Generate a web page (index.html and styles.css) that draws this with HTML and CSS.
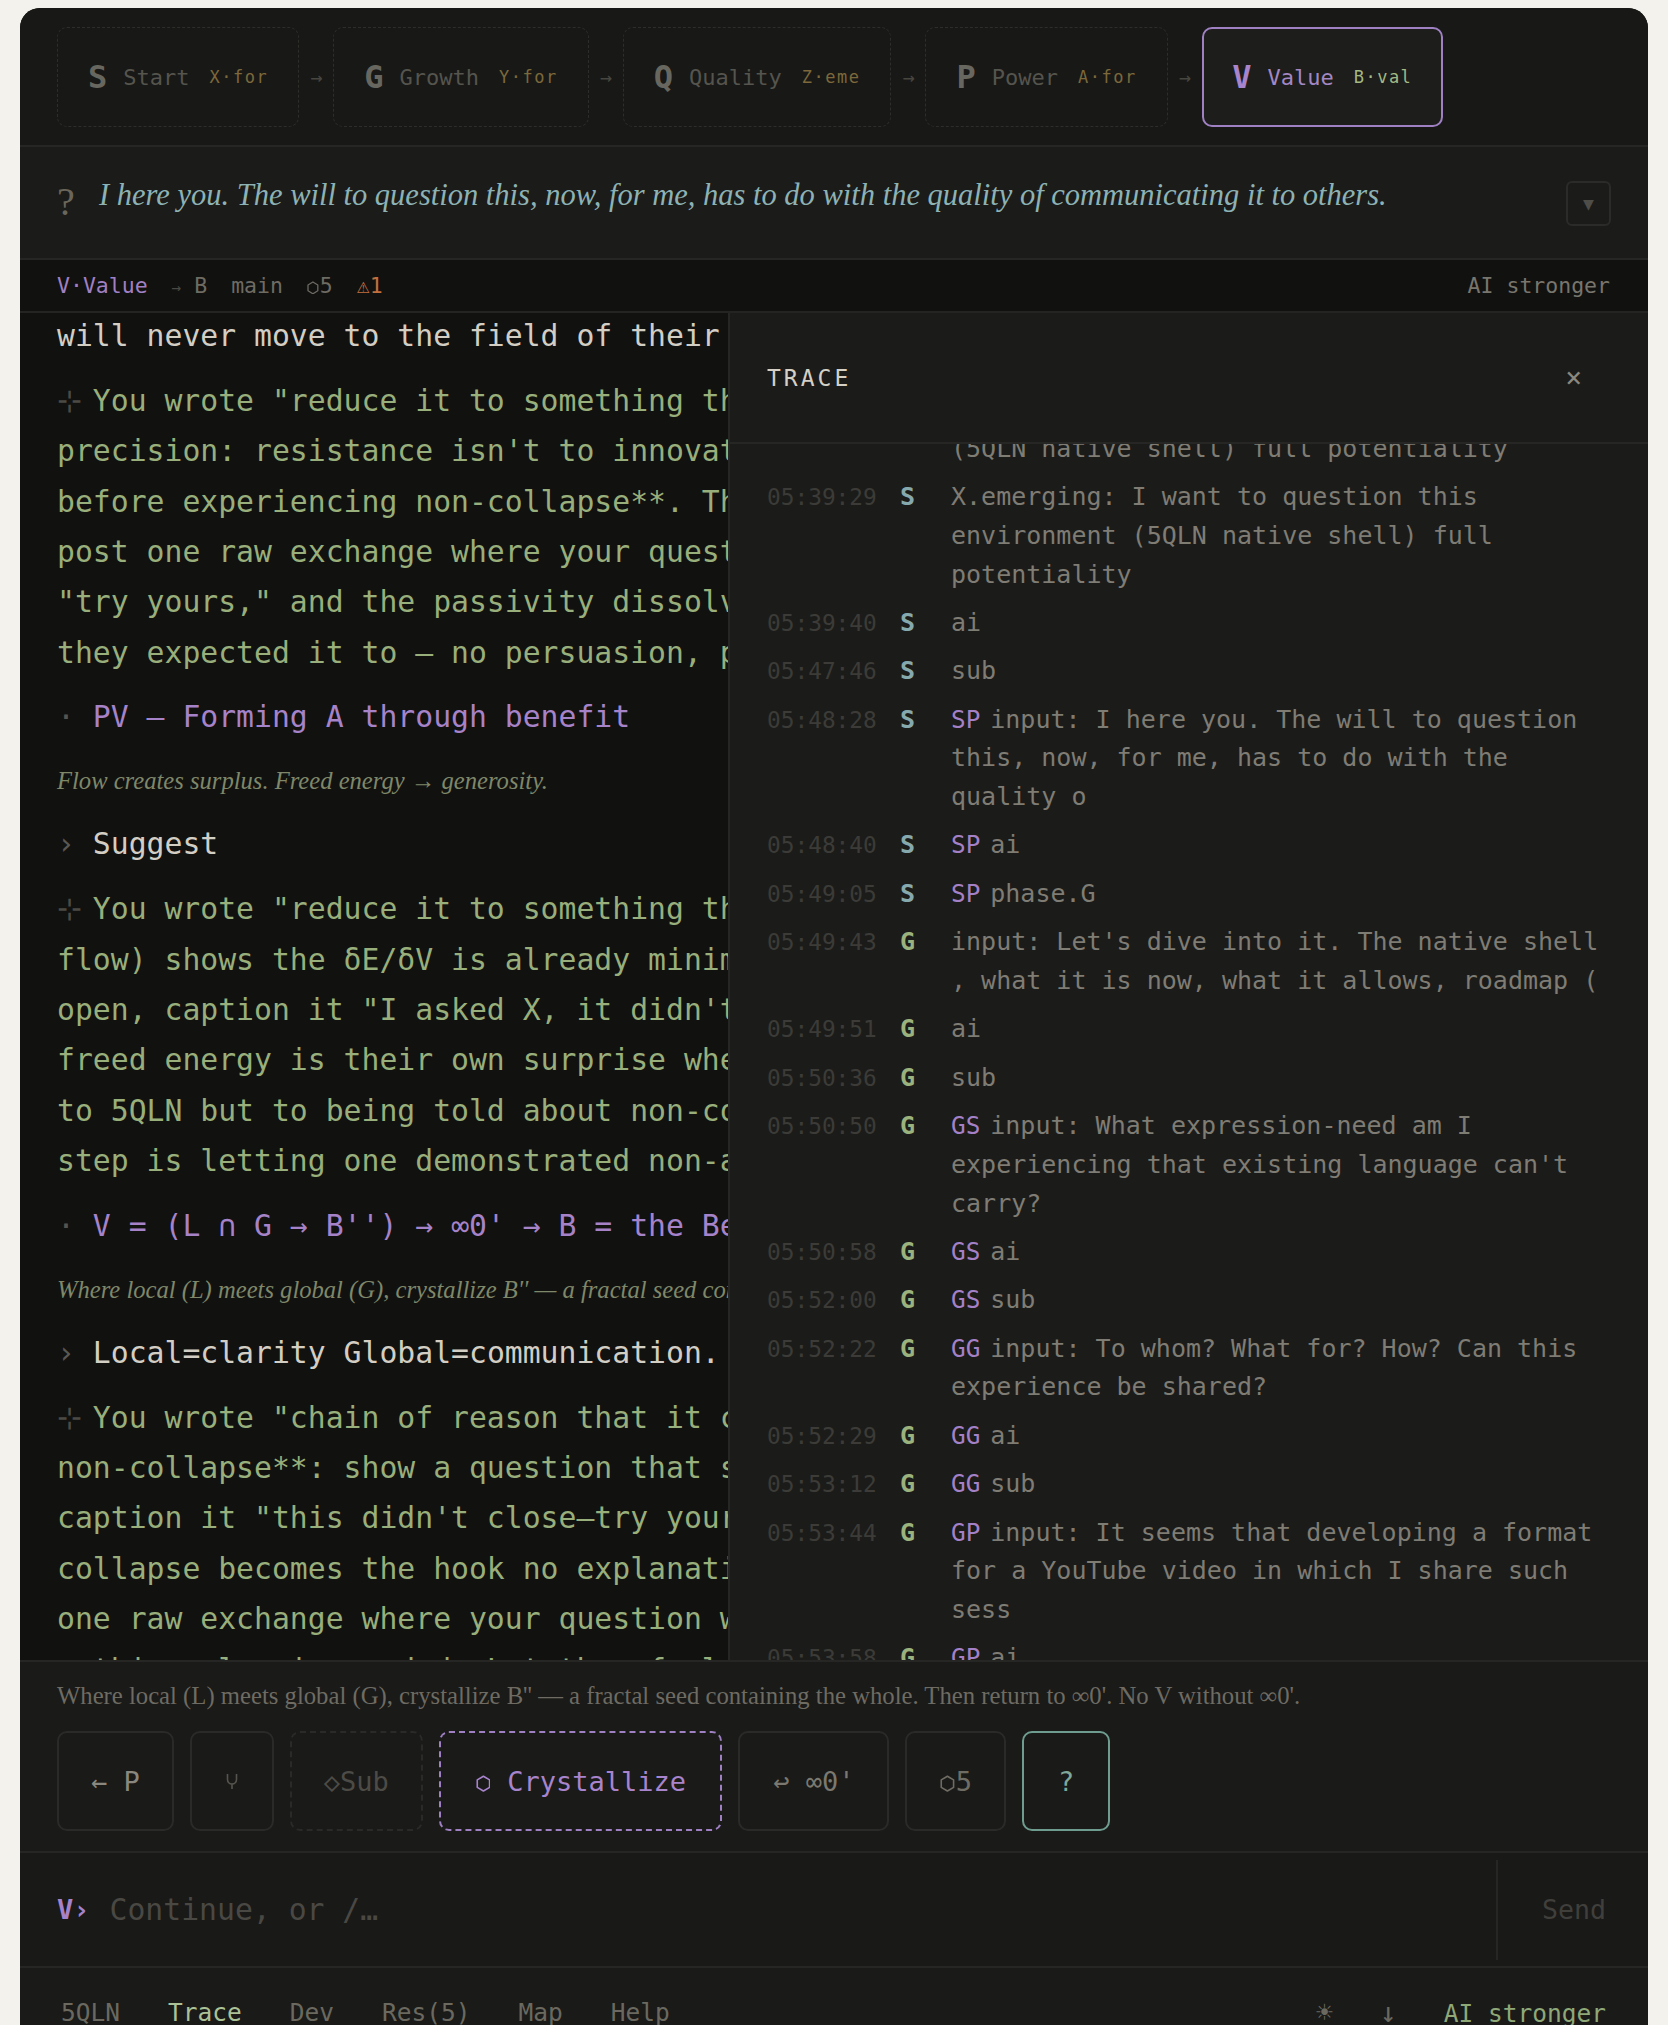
FILE: index.html
```html
<!DOCTYPE html>
<html lang="en">
<head>
<meta charset="utf-8">
<title>5QLN — Value</title>
<link rel="stylesheet" href="styles.css">
</head>
<body>
<div class="app">
  <header class="phasebar">
    <div class="phase"><span class="ph-letter">S</span><span class="ph-name">Start</span><span class="ph-sub">X·for</span></div>
    <span class="ph-arrow">→</span>
    <div class="phase"><span class="ph-letter">G</span><span class="ph-name">Growth</span><span class="ph-sub">Y·for</span></div>
    <span class="ph-arrow">→</span>
    <div class="phase"><span class="ph-letter">Q</span><span class="ph-name">Quality</span><span class="ph-sub">Z·eme</span></div>
    <span class="ph-arrow">→</span>
    <div class="phase"><span class="ph-letter">P</span><span class="ph-name">Power</span><span class="ph-sub">A·for</span></div>
    <span class="ph-arrow">→</span>
    <div class="phase active"><span class="ph-letter">V</span><span class="ph-name">Value</span><span class="ph-sub">B·val</span></div>
  </header>

  <section class="question">
    <span class="q-mark">?</span>
    <p class="q-text">I here you. The will to question this, now, for me, has to do with the quality of communicating it to others.</p>
    <button class="q-toggle" type="button">▼</button>
  </section>

  <div class="status">
    <div class="status-left">
      <span class="st-phase">V·Value</span>
      <span class="st-branch"><span class="st-arrow">→</span> B</span>
      <span>main</span>
      <span><span class="sym"><svg class="hex" viewBox="0 0 12 14"><polygon points="6,1 11,4 11,10 6,13 1,10 1,4"/></svg></span>5</span>
      <span class="st-warn"><span class="sym">⚠</span>1</span>
    </div>
    <span class="status-right">AI stronger</span>
  </div>

  <main class="stage">
    <div class="transcript">
      <p class="user">will never move to the field of their own experience.</p>
      <p class="ai"><span class="mark sym">⊹</span> You wrote "reduce it to something that anyone can use" — and that is the<br>precision: resistance isn't to innovation itself, it's to committing<br>before experiencing non-collapse**. The move that follows is simple:<br>post one raw exchange where your question stayed open, invite them to<br>"try yours," and the passivity dissolves the moment it doesn't close the way<br>they expected it to — no persuasion, proof.</p>
      <p class="head"><span class="dot">·</span> PV — Forming A through benefit</p>
      <p class="note">Flow creates surplus. Freed energy → generosity.</p>
      <p class="cmd"><span class="caret">›</span> Suggest</p>
      <p class="ai"><span class="mark sym">⊹</span> You wrote "reduce it to something that anyone can use" — and the record (your<br>flow) shows the δE/δV is already minimal: you don't need to simplify, you<br>open, caption it "I asked X, it didn't close," and post it. What reads as<br>freed energy is their own surprise when it holds. The resistance was never<br>to 5QLN but to being told about non-collapse instead of seeing it. The next<br>step is letting one demonstrated non-answer speak for itself.</p>
      <p class="head"><span class="dot">·</span> V = (L ∩ G → B'') → ∞0' → B = the Benefit</p>
      <p class="note">Where local (L) meets global (G), crystallize B'' — a fractal seed containing the whole.</p>
      <p class="cmd"><span class="caret">›</span> Local=clarity Global=communication.</p>
      <p class="ai"><span class="mark sym">⊹</span> You wrote "chain of reason that it can follow" — that is the ask before<br>non-collapse**: show a question that stayed open in practice, then<br>caption it "this didn't close—try yours." The moment of witnessed non-<br>collapse becomes the hook no explanation could be. Start small: post<br>one raw exchange where your question wasn't answered away, and<br>nothing else is needed. Let them feel it open.</p>
    </div>

    <aside class="trace">
      <div class="trace-head">
        <span class="trace-title">TRACE</span>
        <span class="trace-close">×</span>
      </div>
      <div class="trace-list">
        <div class="trace-rows">
          <div class="row"><span class="t">05:39:18</span><span class="ph s">S</span><span class="msg">input: I want to question this environment (5QLN native shell) full potentiality</span></div>
          <div class="row"><span class="t">05:39:29</span><span class="ph s">S</span><span class="msg">X.emerging: I want to question this environment (5QLN native shell) full potentiality</span></div>
          <div class="row"><span class="t">05:39:40</span><span class="ph s">S</span><span class="msg">ai</span></div>
          <div class="row"><span class="t">05:47:46</span><span class="ph s">S</span><span class="msg">sub</span></div>
          <div class="row"><span class="t">05:48:28</span><span class="ph s">S</span><span class="msg"><span class="tag">SP</span>input: I here you. The will to question this, now, for me, has to do with the quality o</span></div>
          <div class="row"><span class="t">05:48:40</span><span class="ph s">S</span><span class="msg"><span class="tag">SP</span>ai</span></div>
          <div class="row"><span class="t">05:49:05</span><span class="ph s">S</span><span class="msg"><span class="tag">SP</span>phase.G</span></div>
          <div class="row"><span class="t">05:49:43</span><span class="ph g">G</span><span class="msg">input: Let's dive into it. The native shell , what it is now, what it allows, roadmap (</span></div>
          <div class="row"><span class="t">05:49:51</span><span class="ph g">G</span><span class="msg">ai</span></div>
          <div class="row"><span class="t">05:50:36</span><span class="ph g">G</span><span class="msg">sub</span></div>
          <div class="row"><span class="t">05:50:50</span><span class="ph g">G</span><span class="msg"><span class="tag">GS</span>input: What expression-need am I experiencing that existing language can't carry?</span></div>
          <div class="row"><span class="t">05:50:58</span><span class="ph g">G</span><span class="msg"><span class="tag">GS</span>ai</span></div>
          <div class="row"><span class="t">05:52:00</span><span class="ph g">G</span><span class="msg"><span class="tag">GS</span>sub</span></div>
          <div class="row"><span class="t">05:52:22</span><span class="ph g">G</span><span class="msg"><span class="tag">GG</span>input: To whom? What for? How? Can this experience be shared?</span></div>
          <div class="row"><span class="t">05:52:29</span><span class="ph g">G</span><span class="msg"><span class="tag">GG</span>ai</span></div>
          <div class="row"><span class="t">05:53:12</span><span class="ph g">G</span><span class="msg"><span class="tag">GG</span>sub</span></div>
          <div class="row"><span class="t">05:53:44</span><span class="ph g">G</span><span class="msg"><span class="tag">GP</span>input: It seems that developing a format for a YouTube video in which I share such sess</span></div>
          <div class="row"><span class="t">05:53:58</span><span class="ph g">G</span><span class="msg"><span class="tag">GP</span>ai</span></div>
          <div class="row"><span class="t">05:54:20</span><span class="ph g">G</span><span class="msg"><span class="tag">GP</span>sub</span></div>
        </div>
      </div>
    </aside>
  </main>

  <section class="actions">
    <p class="hint">Where local (L) meets global (G), crystallize B'' — a fractal seed containing the whole. Then return to ∞0'. No V without ∞0'.</p>
    <div class="btns">
      <button class="btn" type="button"><span class="sym">←</span> P</button>
      <button class="btn btn-fork" type="button"><svg class="fork" viewBox="0 0 14 20" width="14" height="20"><path d="M2.5 3v5.5a4.5 4.5 0 0 0 9 0V3M7 13v5" fill="none" stroke="currentColor" stroke-width="1.6"/></svg></button>
      <button class="btn btn-sub" type="button"><span class="sym">◇</span>Sub</button>
      <button class="btn btn-cry" type="button"><span class="sym"><svg class="hex" viewBox="0 0 12 14"><polygon points="6,1 11,4 11,10 6,13 1,10 1,4"/></svg></span> Crystallize</button>
      <button class="btn btn-ret" type="button"><span class="sym">↩</span> ∞0'</button>
      <button class="btn btn-hex" type="button"><span class="sym"><svg class="hex" viewBox="0 0 12 14"><polygon points="6,1 11,4 11,10 6,13 1,10 1,4"/></svg></span>5</button>
      <button class="btn btn-help" type="button">?</button>
    </div>
  </section>

  <form class="composer">
    <span class="prompt">V›</span>
    <span class="placeholder">Continue, or /…</span>
    <button class="send" type="button">Send</button>
  </form>

  <footer class="foot">
    <nav class="foot-left">
      <span>5QLN</span>
      <span class="on">Trace</span>
      <span>Dev</span>
      <span>Res(5)</span>
      <span>Map</span>
      <span>Help</span>
    </nav>
    <div class="foot-right">
      <span class="sym sun">☀</span>
      <span class="sym arrow">↓</span>
      <span class="ai-strong">AI stronger</span>
    </div>
  </footer>
</div>
</body>
</html>
```

FILE: styles.css
```css
* { box-sizing: border-box; margin: 0; padding: 0; }

html, body {
  background: #f3f2ed;
  height: 2025px;
  overflow: hidden;
}

body {
  padding: 8px 20px 0;
  font-family: "DejaVu Sans Mono", "Liberation Mono", monospace;
  color: #cfcac0;
}

button {
  font-family: inherit;
  background: none;
  cursor: pointer;
}

.sym {
  display: inline-block;
  width: 1ch;
  text-align: center;
}

.hex {
  width: 0.55em;
  height: 0.64em;
  vertical-align: -0.06em;
  fill: none;
  stroke: currentColor;
  stroke-width: 1.3;
  stroke-linejoin: round;
}

.app {
  width: 1628px;
  height: 2017px;
  background: #151514;
  border-radius: 20px 20px 0 0;
  overflow: hidden;
  display: flex;
  flex-direction: column;
}

/* ---------- phase bar ---------- */
.phasebar {
  flex: none;
  height: 139px;
  display: flex;
  align-items: center;
  gap: 11px;
  padding: 19px 37px 18px;
  background: #181817;
  border-bottom: 2px solid #262624;
}

.phase {
  height: 100px;
  display: flex;
  align-items: center;
  padding: 0 30px;
  border: 1.5px dashed #2d2d2a;
  border-radius: 10px;
}

.ph-letter {
  font-size: 32px;
  font-weight: bold;
  color: #68675f;
  margin-right: 16px;
}

.ph-name {
  font-size: 22px;
  color: #55544d;
  margin-right: 20px;
}

.ph-sub {
  font-size: 17px;
  letter-spacing: 1.5px;
  color: #7c683a;
}

.ph-arrow {
  font-size: 20px;
  color: #47463f;
}

.phase.active {
  border: 2px solid #9f80c2;
  background: #1d1d1c;
  padding: 0 28.5px;
}

.phase.active .ph-letter { color: #a884cc; }
.phase.active .ph-name { color: #a287c4; }
.phase.active .ph-sub { color: #a2b983; }

/* ---------- question ---------- */
.question {
  flex: none;
  height: 113px;
  display: flex;
  align-items: flex-start;
  padding: 28px 37px 0;
  background: #1b1b1a;
  border-bottom: 2px solid #262624;
}

.q-mark {
  width: 42px;
  flex: none;
  margin-top: 3px;
  font-family: "Liberation Serif", serif;
  font-size: 40px;
  line-height: 48px;
  color: #6b665a;
}

.q-text {
  flex: 1;
  font-family: "Liberation Serif", serif;
  font-style: italic;
  font-size: 30.5px;
  line-height: 40px;
  color: #8db2b4;
}

.q-toggle {
  flex: none;
  width: 45px;
  height: 45px;
  margin-top: 6px;
  border: 2px solid #2b2b29;
  border-radius: 6px;
  color: #4f4d47;
  font-size: 18px;
}

/* ---------- status ---------- */
.status {
  flex: none;
  height: 53px;
  display: flex;
  align-items: center;
  justify-content: space-between;
  padding: 0 38px 0 37px;
  background: #111110;
  border-bottom: 2px solid #242422;
  font-size: 21.5px;
  color: #6e6b63;
}

.status-left {
  display: flex;
  align-items: center;
  gap: 24px;
}

.st-phase { color: #a07fc3; }
.st-arrow { color: #4a4944; font-size: 16px; }
.st-warn { color: #c26f3d; }
.status-right { color: #78756c; }

/* ---------- stage ---------- */
.stage {
  flex: none;
  position: relative;
  height: 1347px;
  background: #111110;
  overflow: hidden;
}

.transcript {
  margin-top: -2px;
  padding: 0 37px;
  font-size: 29.75px;
  line-height: 50.4px;
  white-space: nowrap;
}

.transcript > * + * { margin-top: 14.3px; }

.user { color: #d3cec4; }
.ai { color: #98ae7b; }
.mark { color: #4b4a44; }
.head { color: #a683c9; }
.dot { color: #56544e; }
.cmd { color: #d3cec4; }
.caret { color: #5a5852; }

.note {
  font-family: "Liberation Serif", serif;
  font-style: italic;
  font-size: 24.6px;
  line-height: 48px;
  color: #7f8769;
}

/* ---------- trace overlay ---------- */
.trace {
  position: absolute;
  top: 0;
  right: 0;
  bottom: 0;
  width: 920px;
  display: flex;
  flex-direction: column;
  background: #1b1b1a;
  border-left: 2px solid #262624;
}

.trace-head {
  flex: none;
  height: 131px;
  display: flex;
  align-items: center;
  justify-content: space-between;
  padding: 0 66px 0 37px;
  border-bottom: 2px solid #262624;
}

.trace-title {
  font-size: 23px;
  letter-spacing: 3px;
  color: #d5d0c5;
}

.trace-close {
  font-size: 28px;
  color: #8a877e;
}

.trace-list {
  flex: 1;
  overflow: hidden;
  padding-left: 37px;
}

.trace-rows {
  margin-top: -53px;
  display: flex;
  flex-direction: column;
  gap: 9.7px;
}

.row {
  display: grid;
  grid-template-columns: 133px 51px 677px;
  font-size: 25px;
  line-height: 38.7px;
}

.t { font-size: 22.8px; color: #3c3b37; }
.ph { font-weight: bold; }
.ph.s { color: #86a9ad; }
.ph.g { color: #9bb27d; }
.msg { color: #7f7c74; }
.tag { font-size: 24.3px; color: #a481c6; margin-right: 10px; }

/* ---------- actions ---------- */
.actions {
  flex: none;
  height: 191px;
  padding: 19px 37px 0;
  background: #1a1a19;
  border-top: 2px solid #262624;
}

.hint {
  font-family: "Liberation Serif", serif;
  font-size: 24.7px;
  line-height: 30px;
  color: #6e6b62;
  white-space: nowrap;
}

.btns {
  display: flex;
  gap: 16px;
  margin-top: 20px;
}

.btn {
  height: 100px;
  display: flex;
  align-items: center;
  padding: 0 32px;
  border: 2px solid #2a2a28;
  border-radius: 10px;
  font-size: 27px;
  color: #8a877e;
  white-space: pre;
}

.btn-fork { color: #56544e; padding: 0 33px; }
.btn-sub { border-style: dashed; color: #4d4b46; }
.btn-cry { border: 2px dashed #9f80c2; color: #a884cc; padding: 0 34px; }
.btn-ret { color: #7b786f; padding: 0 33px; }
.btn-hex { color: #6f6c63; }
.btn-help { border-color: #6e9d90; color: #7fa89b; padding: 0 34px; }

/* ---------- composer ---------- */
.composer {
  flex: none;
  height: 115px;
  display: flex;
  align-items: center;
  padding-left: 37px;
  background: #191918;
  border-top: 2px solid #262624;
  font-size: 29.75px;
}

.prompt {
  color: #a683c9;
  font-weight: bold;
  font-size: 27px;
  margin-right: 20px;
}

.placeholder {
  flex: 1;
  color: #4a4843;
}

.send {
  height: 100px;
  display: flex;
  align-items: center;
  padding: 0 42px 0 44px;
  border: none;
  border-left: 2px solid #262624;
  font-size: 26.6px;
  color: #403f3b;
}

/* ---------- footer ---------- */
.foot {
  flex: none;
  height: 80px;
  display: flex;
  justify-content: space-between;
  padding: 30px 42px 0 41px;
  background: #1a1a19;
  border-top: 2px solid #262624;
  font-size: 24.5px;
  line-height: 30px;
  color: #6b695f;
}

.foot-left, .foot-right {
  display: flex;
  align-items: baseline;
  gap: 48px;
}

.foot-right { gap: 47px; }
.foot .sun { font-size: 28px; width: auto; }
.foot .arrow { font-size: 28px; width: auto; }

.foot-left .on { color: #abc196; }
.ai-strong { color: #8fa878; }
```
